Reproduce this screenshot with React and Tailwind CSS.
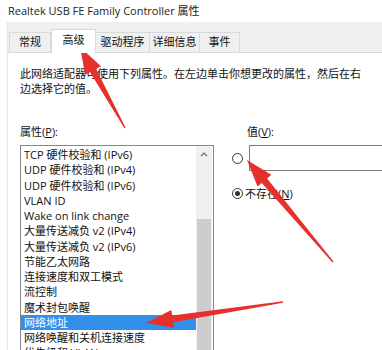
const items = [
  "TCP 硬件校验和 (IPv6)",
  "UDP 硬件校验和 (IPv4)",
  "UDP 硬件校验和 (IPv6)",
  "VLAN ID",
  "Wake on link change",
  "大量传送减负 v2 (IPv4)",
  "大量传送减负 v2 (IPv6)",
  "节能乙太网路",
  "连接速度和双工模式",
  "流控制",
  "魔术封包唤醒",
  "网络地址",
  "网络唤醒和关机连接速度",
  "优先级和 VLAN",
];

const tabs = ["常规", "高级", "驱动程序", "详细信息", "事件"];
const tabWidths = [42, 45, 55, 51, 41];

// red call-out arrow, tapered shaft with a triangle head
const arrowPoints = (x1, y1, x2, y2) => {
  const dx = x2 - x1;
  const dy = y2 - y1;
  const len = Math.hypot(dx, dy);
  const ux = dx / len;
  const uy = dy / len;
  const nx = -uy;
  const ny = ux;
  const L = 27;
  const bx = x2 - ux * L;
  const by = y2 - uy * L;
  const pts = [
    [x1 + nx * 0.7, y1 + ny * 0.7],
    [bx + nx * 3.5, by + ny * 3.5],
    [bx + nx * 9, by + ny * 9],
    [x2, y2],
    [bx - nx * 9, by - ny * 9],
    [bx - nx * 3.5, by - ny * 3.5],
    [x1 - nx * 0.7, y1 - ny * 0.7],
  ];
  return pts.map((p) => p.join(",")).join(" ");
};

const Radio = ({ checked }) => (
  <span className="flex items-center justify-center w-[11px] h-[11px] rounded-full border border-[#333] bg-white">
    {checked && <span className="w-[5px] h-[5px] rounded-full bg-[#333]" />}
  </span>
);

const App = () => {
  return (
    <div className="relative w-[382px] h-[350px] overflow-hidden bg-white text-[11px] text-[#111] font-[family-name:'Open_Sans','Noto_Sans_CJK_SC',sans-serif]">
      <div className="h-[22px] flex items-center pl-[8px] text-[11px] text-[#222]">
        Realtek USB FE Family Controller 属性
      </div>

      <div className="ml-[7px] border-l border-[#e3e8ef]">
        <div className="h-[30px] bg-[#f0f0f0] flex items-end pl-[1px]">
          {tabs.map((t, i) =>
            i === 1 ? (
              <div
                key={t}
                className="h-[24px] -mb-px bg-white border border-b-0 border-[#d9d9d9] flex items-center justify-center pb-[2px] relative z-10"
                style={{ width: tabWidths[i] }}
              >
                {t}
              </div>
            ) : (
              <div
                key={t}
                className="h-[20px] border border-b-0 border-[#d9d9d9] bg-[#f0f0f0] flex items-center justify-center -ml-px first:ml-0"
                style={{ width: tabWidths[i] }}
              >
                {t}
              </div>
            )
          )}
        </div>

        <div className="border-t border-[#d9d9d9] pl-[12px] pt-[13px]">
          <p className="leading-[15px] w-[350px]">
            此网络适配器可使用下列属性。在左边单击你想更改的属性，然后在右边选择它的值。
          </p>

          <div className="flex mt-[28px]">
            <div className="w-[194px]">
              <div className="h-[15px] leading-[15px]">
                属性(<span className="underline">P</span>):
              </div>
              <div className="mt-[6px] h-[220px] border border-[#828790] flex">
                <div className="flex-1 pt-px">
                  {items.map((it) =>
                    it === "网络地址" ? (
                      <div
                        key={it}
                        className="h-[15.25px] leading-[15.25px] pl-[3px] bg-[#3390e8] text-white"
                      >
                        {it}
                      </div>
                    ) : (
                      <div key={it} className="h-[15.25px] leading-[15.25px] pl-[3px] whitespace-nowrap">
                        {it}
                      </div>
                    )
                  )}
                </div>
                <div className="w-[17px] bg-[#f0f0f0] flex flex-col items-center border-r border-white">
                  <div className="h-[17px] flex items-center justify-center">
                    <svg width="8" height="5" viewBox="0 0 8 5">
                      <path d="M1 4.2 L4 1.2 L7 4.2" fill="none" stroke="#606060" strokeWidth="1.2" />
                    </svg>
                  </div>
                  <div className="mt-[56px] w-[14px] flex-1 bg-[#cdcdcd]" />
                </div>
              </div>
            </div>

            <div className="ml-[18px] flex-1">
              <div className="pl-[15px] h-[15px] leading-[15px]">
                值(<span className="underline">V</span>):
              </div>
              <div className="mt-[6px] flex items-center">
                <Radio />
                <div className="ml-[6px] h-[26px] flex-1 border border-[#7a7a7a] border-r-0" />
              </div>
              <div className="mt-[15px] flex items-center gap-[2px]">
                <Radio checked />
                <span className="leading-[15px]">
                  不存在(<span className="underline">N</span>)
                </span>
              </div>
            </div>
          </div>
        </div>
      </div>

      <svg className="absolute inset-0 pointer-events-none" width="382" height="350">
        <polygon points={arrowPoints(125, 128, 80, 47)} fill="#e6302b" />
        <polygon points={arrowPoints(333, 262, 247, 160)} fill="#e6302b" />
        <polygon points={arrowPoints(283, 302, 146, 323)} fill="#e6302b" />
      </svg>
    </div>
  );
};

export default App;
